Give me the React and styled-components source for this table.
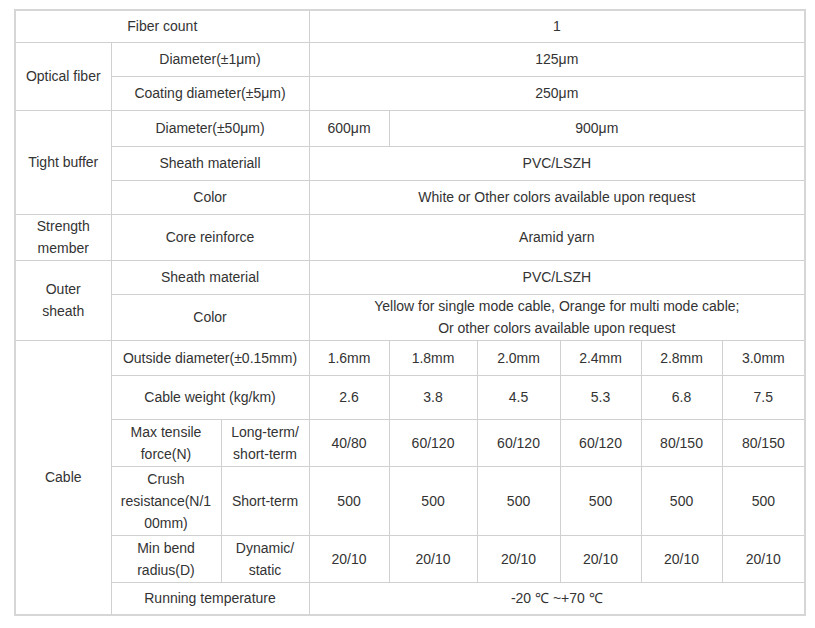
import React from "react";
import styled, { createGlobalStyle } from "styled-components";

const GlobalStyle = createGlobalStyle`
  html, body {
    margin: 0;
    padding: 0;
    background: #fff;
  }
  body {
    font-family: "Liberation Sans", Arial, sans-serif;
  }
`;

const Page = styled.div`
  padding: 9px 11px 14px 14px;
`;

const SpecTable = styled.table`
  width: 790px;
  table-layout: fixed;
  border-collapse: collapse;
  border: 2px solid #d6d6d6;
  font-size: 14px;
  line-height: 22px;
  color: #333;
`;

const Row = styled.tr`
  height: ${(p) => p.$h}px;
`;

const Cell = styled.td`
  border: 1px solid #d0d0d0;
  padding: 0 8px;
  text-align: center;
  vertical-align: middle;
  overflow-wrap: ${(p) => (p.$breakWord ? "anywhere" : "normal")};
`;

const widths = [96, 110, 88, 80, 88, 83, 81, 81, 83];
const sizes = ["1.6mm", "1.8mm", "2.0mm", "2.4mm", "2.8mm", "3.0mm"];
const weights = ["2.6", "3.8", "4.5", "5.3", "6.8", "7.5"];
const tensile = ["40/80", "60/120", "60/120", "60/120", "80/150", "80/150"];
const crush = ["500", "500", "500", "500", "500", "500"];
const bend = ["20/10", "20/10", "20/10", "20/10", "20/10", "20/10"];

const Values = ({ items }) =>
  items.map((v, i) => <Cell key={i}>{v}</Cell>);

export default function App() {
  return (
    <Page>
      <GlobalStyle />
      <SpecTable>
        <colgroup>
          {widths.map((w, i) => (
            <col key={i} style={{ width: w }} />
          ))}
        </colgroup>
        <tbody>
          <Row $h={32}>
            <Cell colSpan={3}>Fiber count</Cell>
            <Cell colSpan={6}>1</Cell>
          </Row>

          <Row $h={34}>
            <Cell rowSpan={2}>Optical fiber</Cell>
            <Cell colSpan={2}>Diameter(±1μm)</Cell>
            <Cell colSpan={6}>125μm</Cell>
          </Row>
          <Row $h={34}>
            <Cell colSpan={2}>Coating diameter(±5μm)</Cell>
            <Cell colSpan={6}>250μm</Cell>
          </Row>

          <Row $h={36}>
            <Cell rowSpan={3}>Tight buffer</Cell>
            <Cell colSpan={2}>Diameter(±50μm)</Cell>
            <Cell>600μm</Cell>
            <Cell colSpan={5}>900μm</Cell>
          </Row>
          <Row $h={34}>
            <Cell colSpan={2}>Sheath materiall</Cell>
            <Cell colSpan={6}>PVC/LSZH</Cell>
          </Row>
          <Row $h={34}>
            <Cell colSpan={2}>Color</Cell>
            <Cell colSpan={6}>White or Other colors available upon request</Cell>
          </Row>

          <Row $h={46}>
            <Cell>Strength member</Cell>
            <Cell colSpan={2}>Core reinforce</Cell>
            <Cell colSpan={6}>Aramid yarn</Cell>
          </Row>

          <Row $h={34}>
            <Cell rowSpan={2}>Outer sheath</Cell>
            <Cell colSpan={2}>Sheath material</Cell>
            <Cell colSpan={6}>PVC/LSZH</Cell>
          </Row>
          <Row $h={46}>
            <Cell colSpan={2}>Color</Cell>
            <Cell colSpan={6}>
              Yellow for single mode cable, Orange for multi mode cable;
              <br />
              Or other colors available upon request
            </Cell>
          </Row>

          <Row $h={35}>
            <Cell rowSpan={6}>Cable</Cell>
            <Cell colSpan={2}>Outside diameter(±0.15mm)</Cell>
            <Values items={sizes} />
          </Row>
          <Row $h={44}>
            <Cell colSpan={2}>Cable weight (kg/km)</Cell>
            <Values items={weights} />
          </Row>
          <Row $h={47}>
            <Cell>Max tensile force(N)</Cell>
            <Cell>Long-term/ short-term</Cell>
            <Values items={tensile} />
          </Row>
          <Row $h={69}>
            <Cell $breakWord>Crush resistance(N/100mm)</Cell>
            <Cell>Short-term</Cell>
            <Values items={crush} />
          </Row>
          <Row $h={47}>
            <Cell>Min bend radius(D)</Cell>
            <Cell>Dynamic/ static</Cell>
            <Values items={bend} />
          </Row>
          <Row $h={33}>
            <Cell colSpan={2}>Running temperature</Cell>
            <Cell colSpan={6}>-20 ℃ ~+70 ℃</Cell>
          </Row>
        </tbody>
      </SpecTable>
    </Page>
  );
}
